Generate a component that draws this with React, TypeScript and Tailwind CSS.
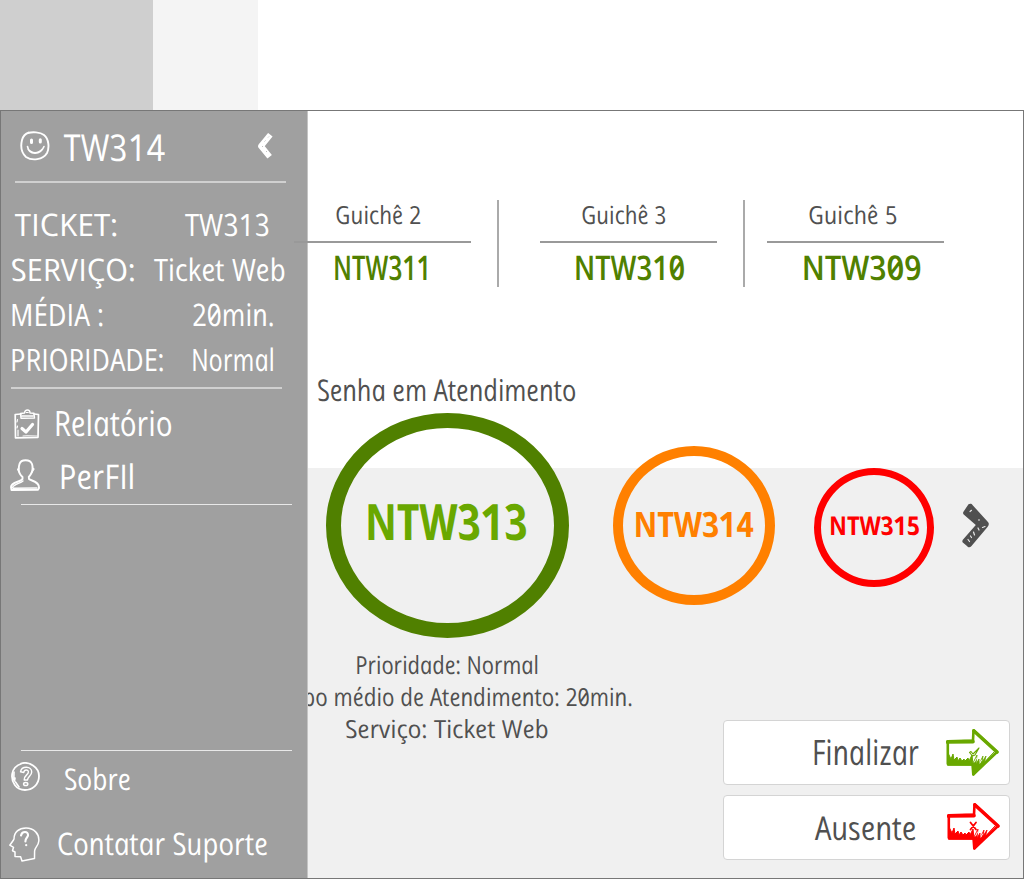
import { useLayoutEffect, useRef, useState } from "react";

type LetteringProps = { text: string; width: number; className?: string };

/* Upright cursive lettering, condensed or expanded to the width of its slot. */
function Lettering({ text, width, className = "" }: LetteringProps) {
  const ref = useRef<HTMLSpanElement>(null);
  const [scale, setScale] = useState(1);
  useLayoutEffect(() => {
    if (ref.current) setScale(width / ref.current.offsetWidth);
  }, [text, width]);
  return (
    <span
      className={`block shrink-0 whitespace-nowrap font-['Open_Sans','Noto_Sans',sans-serif] italic slashed-zero leading-none ${className}`}
      style={{ width }}
    >
      <span
        ref={ref}
        className="inline-block origin-[0_88%] align-top"
        style={{ transform: `translate(1.5px, 1px) scaleX(${scale}) skewX(12deg)` }}
      >
        {text}
      </span>
    </span>
  );
}

function Smiley() {
  return (
    <svg className="mt-[2px] h-[30px] w-[30px] shrink-0" viewBox="0 0 30 30" fill="none" stroke="white" strokeLinecap="round">
      <path d="M8 2C12 .8 20 .8 24 4C29 8 29.5 17 27 22C23 29 12 30 6 26C.5 21 .8 14 2 9C3 5 6 2.5 9 1.5" strokeWidth="1.9" />
      <path d="M7.5 15.5C9 24 20 25 24 15.5M8 18C12 23 18 23 22.5 18" strokeWidth="1.6" />
      <path d="M11.5 9V11.5M20.3 8.7V11" strokeWidth="3" />
    </svg>
  );
}

function ChevronLeft() {
  return (
    <svg className="mt-[2px] h-[26px] w-4 shrink-0" viewBox="0 0 16 26" fill="none">
      <path d="M11.5 4L4 13.2L10.8 21.5" stroke="white" strokeWidth="5.8" strokeLinejoin="round" strokeLinecap="square" />
      <path d="M12 3.5L11 4.5M8.5 7.5L7.5 8.5M5 13L6 14M9 18L10 19" stroke="#bcbcbc" strokeWidth=".9" />
    </svg>
  );
}

function Clipboard() {
  return (
    <svg className="h-[30px] w-[26px] shrink-0" viewBox="0 0 26 30" fill="none" stroke="white" strokeLinejoin="round" strokeLinecap="round">
      <path d="M7 5L1.2 5.5L1.5 28.8L24 28.3L24.5 5.5L20 5" strokeWidth="1.7" />
      <path d="M6.5 4.5L10.5 4C11 0 16 0 16 4L20 4.3L20.5 9L7 9.2ZM8 7H19" strokeWidth="1.4" />
      <path d="M12.2 3.5H14.2M3.5 10.5L3 13M3.5 17L3 19M4 21V27" strokeWidth="1.2" />
      <path d="M8 19.5L12 23L18.5 15.5" strokeWidth="3.2" />
      <path d="M9 27L13 26.7L23 27" strokeWidth=".9" />
    </svg>
  );
}

function Person() {
  return (
    <svg className="h-8 w-[30px] shrink-0" viewBox="0 0 30 32" fill="none" stroke="white" strokeLinejoin="round" strokeLinecap="round">
      <path d="M12.5 18C9 15 8 10 9.5 5C11 0 20 0 22 5C23.5 10 21.5 15 18.8 18L19 20C21 22 29.5 22 29 29L28 30.7L1.5 31L1 28C1 23 11 23 12.5 20Z" strokeWidth="1.9" />
      <path d="M9 9L7.7 10.5L9.5 14M22.5 9L24 10L21.5 14M2.5 28.5C4 25 10 24.5 13 22M3 29.3L27 29" strokeWidth="1.4" />
    </svg>
  );
}

function HelpCircle() {
  return (
    <svg className="mb-[2px] h-[29px] w-[29px] shrink-0" viewBox="0 0 29 29" fill="none" stroke="white" strokeLinecap="round">
      <path d="M10 1.5C18-1 28 5 28 14C28 23 21 28 14 28C5 28 0 20 1.2 12C2 6 6 3 11 1.5" strokeWidth="1.8" />
      <path d="M3 10L2.8 18M4 16L3.5 19M4.5 20L8 25" strokeWidth="1.6" />
      <path d="M9.5 9.8C10.5 3.5 20.8 3.8 20.7 10C20.6 14 16.8 14.5 16.5 18H13.2C13 13 17.4 13 17.4 10C17.5 7.5 13.2 7 12.8 10.5Z" strokeWidth="1.4" strokeLinejoin="round" />
      <ellipse cx="14.7" cy="22" rx="2.1" ry="1.6" strokeWidth="1.5" />
    </svg>
  );
}

function HeadQuestion() {
  return (
    <svg className="h-[35px] w-[31px] shrink-0" viewBox="0 0 31 35" fill="none" stroke="white" strokeLinejoin="round" strokeLinecap="round">
      <path d="M5 12C5 5 10 1 17 1C25 1 30.5 7 29.8 14C29.4 19 26 20 25.6 24L25.5 31.5L13 34L11.6 29.8L6 29.5L6 25L3.5 23.8L4.5 20.3L.8 18.2L4.5 13Z" strokeWidth="1.5" />
      <path d="M12 8.5C13 3.5 19.5 4 19 8.5C18.5 11 16.3 11 16.4 14.5" strokeWidth="2.1" />
      <path d="M17.2 18V18.2" strokeWidth="2.2" />
    </svg>
  );
}

function ChevronRight() {
  return (
    <svg className="h-[45px] w-7 shrink-0" viewBox="0 0 28 45" fill="none">
      <path d="M1.3 9L6.5 1.3C8 .2 10 .8 10.5 2L25.5 18.5C27.5 20.5 27 22 25.5 24L9.5 43C8 44.8 6 44.5 5 43L.8 39.5C-.2 38.3 .5 37 1.5 36L13.8 22L2 11.8C1 10.8 .9 10 1.3 9Z" fill="#505050" />
      <path d="M8 8.5L9.5 7.3M17 17.3V16.6M20.5 24.5L23 23.5M12.5 32L11.5 29M9.5 34.5L8.5 33M7.5 38.5L6 36.5M17 27L16 25" stroke="#e8e8e8" strokeWidth="1.2" strokeLinecap="round" />
    </svg>
  );
}

function SketchArrow({ kind }: { kind: "done" | "absent" }) {
  const color = kind === "done" ? "#69a800" : "#ff0000";
  return (
    <svg className="h-[49px] w-[53px] shrink-0" viewBox="0 0 53 49" fill="none" stroke={color} strokeLinejoin="round" strokeLinecap="round">
      <path d="M1.8 13.3L27 12.5L27.5 2.3L51 24L27.3 46.5L26.5 36L1.8 35.7Z" strokeWidth="2.6" />
      <path d="M1.5 14L27 13.6M28 3L51 24" strokeWidth="3.6" />
      <path d="M1.5 37L2 25L5 31L7 26L8 32L11 29L12 33L14 30L16 33L18 31L19 33L22 30L23 33L26 27L27 37Z" fill={color} strokeWidth="1" />
      <path d="M26.5 36L31 27L30 36L33 31L33 36L37 28L36 34L40 28L38.5 34L48 24L28 47Z" fill={color} strokeWidth=".8" />
      <path d="M28.5 34L30.5 30M34 35L35.5 32" stroke="white" strokeWidth="1" />
      {kind === "done" ? (
        <path d="M23.5 24.5L25 23.5L27 26L33 20L29 27L26.5 28Z" strokeWidth="1.1" />
      ) : (
        <path d="M23.5 20.5L29 27.5M29 20.5L23.5 27.5" strokeWidth="1.8" />
      )}
    </svg>
  );
}

function Counter({ label, labelWidth, labelClass, code, codeWidth, codeClass }: {
  label: string; labelWidth: number; labelClass: string; code: string; codeWidth: number; codeClass: string;
}) {
  return (
    <div className="flex w-[177px] shrink-0 flex-col">
      <div className="flex h-[26px] items-center text-[#505050]">
        <Lettering text={label} width={labelWidth} className={`text-[25px] ${labelClass}`} />
      </div>
      <div className="mt-[15px] h-[2px] bg-[#999]" />
      <div className="flex h-[46px] items-center text-[#508000]">
        <Lettering text={code} width={codeWidth} className={`text-[34px] font-semibold ${codeClass}`} />
      </div>
    </div>
  );
}

export default function App() {
  return (
    <div className="flex h-[879px] w-[1024px] flex-col overflow-hidden bg-white">
      <header className="flex h-[110px] shrink-0">
        <div className="w-[153px] bg-[#cfcfcf]" />
        <div className="w-[105px] bg-[#f4f4f4]" />
      </header>

      <div className="flex h-[769px] border border-[#777]">
        <aside className="flex w-[307px] shrink-0 flex-col border-r border-[#c4c4c4] bg-[#a0a0a0] font-medium text-white">
          <div className="flex h-[68px] items-center pl-[19px]">
            <Smiley />
            <Lettering text="TW314" width={101} className="ml-[14px] text-[37px]" />
            <span className="ml-[92px]"><ChevronLeft /></span>
          </div>
          <div className="ml-[14px] mt-[2px] h-[2px] w-[271px] bg-[#d0d0d0]" />

          <div className="mt-[18px] flex flex-col text-[31px]">
            <div className="flex h-[45px] items-center pl-[14px]">
              <Lettering text="TICKET:" width={104} />
              <Lettering text="TW313" width={85} className="ml-[66px]" />
            </div>
            <div className="flex h-[45px] items-center pl-[10px]">
              <Lettering text="SERVIÇO:" width={125} />
              <Lettering text="Ticket Web" width={132} className="ml-[18px]" />
            </div>
            <div className="flex h-[45px] items-center pl-[9px]">
              <Lettering text="MÉDIA :" width={94} />
              <Lettering text="20min." width={83} className="ml-[88px]" />
            </div>
            <div className="flex h-[45px] items-center pl-[9px]">
              <Lettering text="PRIORIDADE:" width={155} />
              <Lettering text="Normal" width={84} className="ml-[26px]" />
            </div>
          </div>
          <div className="ml-[10px] mt-[6px] h-[2px] w-[271px] bg-[#d0d0d0]" />

          <nav className="mt-[6px] flex flex-col">
            <div className="flex h-[53px] items-center pl-[13px]">
              <span className="mt-[5px]"><Clipboard /></span>
              <Lettering text="Relatório" width={119} className="ml-[14px] text-[35px]" />
            </div>
            <div className="flex h-[53px] items-center pl-[9px]">
              <Person />
              <Lettering text="PerFIl" width={77} className="ml-[19px] text-[34px]" />
            </div>
          </nav>
          <div className="ml-5 mt-[3px] h-px w-[271px] bg-[#e8e8e8]" />

          <div className="ml-5 mt-[245px] h-px w-[271px] bg-[#e8e8e8]" />
          <div className="flex h-[52px] items-center pl-[10px]">
            <HelpCircle />
            <Lettering text="Sobre" width={67} className="ml-[24px] mt-[2px] text-[30px]" />
          </div>
          <div className="flex h-[75px] items-center pl-[8px]">
            <span className="mt-[7px]"><HeadQuestion /></span>
            <Lettering text="Contatar Suporte" width={211} className="ml-[17px] mt-[3px] text-[31px]" />
          </div>
        </aside>

        <main className="flex min-w-0 flex-1 flex-col bg-[linear-gradient(to_bottom,#fff_357px,#f0f0f0_357px)] pt-[89px] font-medium text-[#505050]">
          <section className="-ml-[14px] flex h-[89px] shrink-0">
            <Counter label="Guichê 2" labelWidth={86} labelClass="ml-[41px]" code="NTW311" codeWidth={98} codeClass="ml-[39px]" />
            <div className="ml-[26px] h-[87px] w-[2px] shrink-0 bg-[#aaa]" />
            <div className="w-[41px] shrink-0" />
            <Counter label="Guichê 3" labelWidth={85} labelClass="ml-[41px]" code="NTW310" codeWidth={111} codeClass="ml-[34px]" />
            <div className="ml-[26px] h-[87px] w-[2px] shrink-0 bg-[#aaa]" />
            <div className="w-[22px] shrink-0" />
            <Counter label="Guichê 5" labelWidth={89} labelClass="ml-[41px]" code="NTW309" codeWidth={120} codeClass="ml-[35px]" />
          </section>

          <div className="ml-[9px] mt-[84px] flex h-[30px] shrink-0 items-center">
            <Lettering text="Senha em Atendimento" width={259} className="mt-[2px] text-[30px]" />
          </div>

          <section className="mt-[10px] flex h-[225px] shrink-0 items-center pl-[18px] font-bold">
            <div className="flex h-[225px] w-[243px] shrink-0 items-center justify-center rounded-[50%] border-[15px] border-[#508000] pb-[11px] text-[#69a800]">
              <Lettering text="NTW313" width={163} className="text-[50px]" />
            </div>
            <div className="ml-[44px] flex h-[159px] w-[162px] shrink-0 items-center justify-center rounded-[50%] border-[10px] border-[#ff8000] pb-[7px] text-[#ff8000]">
              <Lettering text="NTW314" width={120} className="text-[35px]" />
            </div>
            <div className="ml-[39px] mt-[3px] flex h-[119px] w-[120px] shrink-0 items-center justify-center rounded-[50%] border-[7px] border-[#ff0000] pb-[6px] text-[#ff0000]">
              <Lettering text="NTW315" width={91} className="text-[26px]" />
            </div>
            <span className="ml-[28px]"><ChevronRight /></span>
          </section>

          <section className="mt-[9px] flex min-h-0 flex-1">
            <div className="flex w-[415px] shrink-0 flex-col overflow-hidden text-[25px]">
              <div className="flex h-8 items-center pl-[47px]">
                <Lettering text="Prioridade: Normal" width={184} />
              </div>
              <div className="-ml-[47px] flex h-8 items-center">
                <Lettering text="Tempo médio de Atendimento: 20min." width={372} />
              </div>
              <div className="flex h-8 items-center pl-[37px]">
                <Lettering text="Serviço: Ticket Web" width={204} />
              </div>
            </div>
            <div className="flex w-[287px] shrink-0 flex-col gap-[10px] pt-[73px]">
              <button className="flex h-[65px] items-center rounded-[4px] border border-[#d4d4d4] bg-white pl-[88px]">
                <Lettering text="Finalizar" width={107} className="mb-[4px] text-left text-[35px]" />
                <span className="mb-[1px] ml-[27px]"><SketchArrow kind="done" /></span>
              </button>
              <button className="flex h-[65px] items-center rounded-[4px] border border-[#d4d4d4] bg-white pl-[91px]">
                <Lettering text="Ausente" width={102} className="mb-[2px] text-left text-[33px]" />
                <span className="mb-[2px] ml-[30px]"><SketchArrow kind="absent" /></span>
              </button>
            </div>
          </section>
        </main>
      </div>
    </div>
  );
}
